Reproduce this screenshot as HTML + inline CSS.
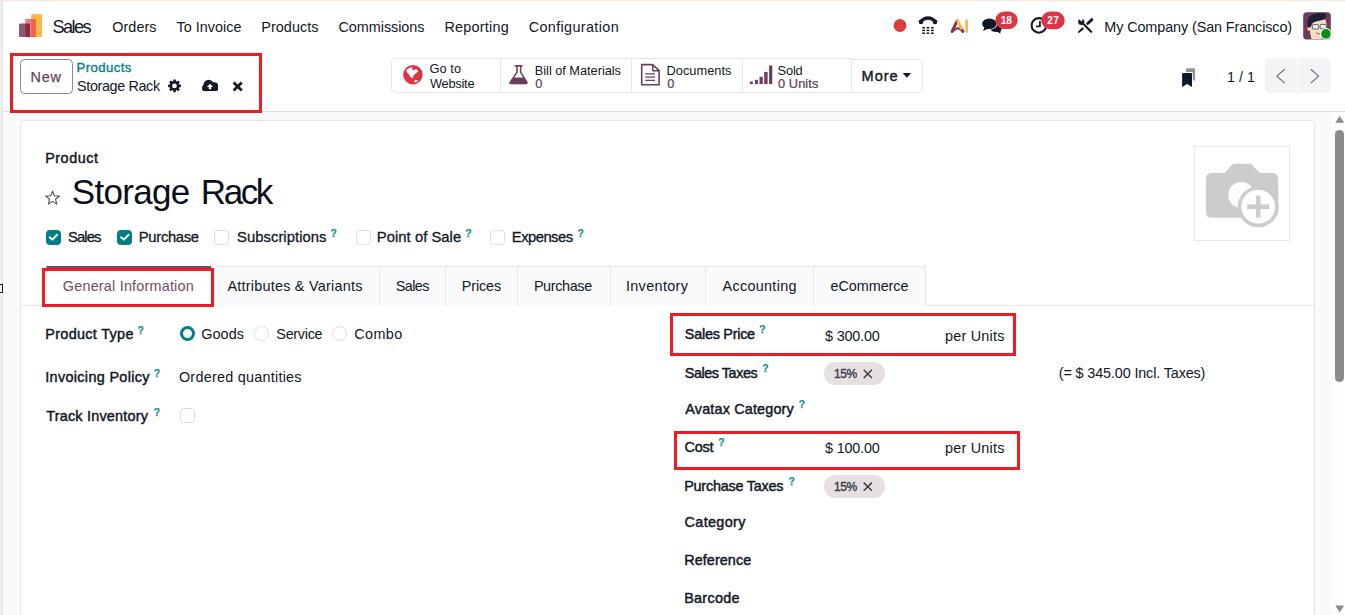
<!DOCTYPE html>
<html lang="en"><head><meta charset="utf-8"><title>Odoo - Storage Rack</title>
<style>

html,body{margin:0;padding:0}
body{width:1345px;height:615px;overflow:hidden;position:relative;background:#fff;font-family:"Liberation Sans",sans-serif;color:#111827}
.t{position:absolute;white-space:nowrap;line-height:1;display:block}
.b{position:absolute;box-sizing:border-box}
svg{position:absolute;overflow:visible}
.red{position:absolute;box-sizing:border-box;border:3px solid #ed1c24}
.tab{position:absolute;box-sizing:border-box;top:266px;height:40px;background:#f9fafb;border:1px solid #e4e7eb;border-bottom:none}
.cb{position:absolute;box-sizing:border-box;width:15px;height:15px;border:1px solid #dadde2;border-radius:3.5px;background:#fff}
.cb.on{background:#017e84;border-color:#017e84}
.rd{position:absolute;box-sizing:border-box;width:15px;height:15px;border:1px solid #dadde2;border-radius:50%;background:#fff}
.rd.on{border:3.8px solid #017e84}
.tag{position:absolute;box-sizing:border-box;height:22.6px;width:60.5px;border-radius:11.3px;background:#e8dfe1}

</style></head>
<body>

<div class="b" style="left:0;top:0;width:1345px;height:2.4px;background:linear-gradient(180deg,#f6dfd1,#fff)"></div>
<nav class="b" id="navbar" style="left:3px;top:2px;width:1342px;height:46px;background:#fff"></nav>
<header class="b" id="control-panel" style="left:3px;top:48px;width:1342px;height:64px;background:#fff;border-bottom:1px solid #dcdfe3"></header>
<main class="b" id="content" style="left:3px;top:112px;width:1329px;height:503px;background:#f9fafb"></main>
<div class="b" id="scrollbar" style="left:1332px;top:112px;width:13px;height:503px;background:#fdfdfd"></div>
<div class="b" style="left:1335.2px;top:130.2px;width:8.5px;height:252px;border-radius:4.25px;background:#898a8d"></div>
<div class="b" style="left:0;top:0;width:3px;height:615px;background:linear-gradient(90deg,#f3f4f6 0,#f3f4f6 30%,#e7e8eb 45%,#e7e8eb 100%)"></div>
<div class="b" style="left:-3.2px;top:283.9px;width:5.9px;height:9px;border:1.4px solid #111827;background:#fff"></div>
<section class="b" id="sheet" style="left:19.8px;top:120px;width:1295.4px;height:520px;background:#fff;border:1px solid #e4e6e9;border-radius:3.5px"></section>
<!-- New button -->
<div class="b" style="left:20px;top:59px;width:52.5px;height:34.5px;border:1px solid #9a8294;border-radius:4.5px;background:#fff"></div>
<!-- button box -->
<div class="b" style="left:850px;top:59px;width:72.6px;height:33.6px;border:1px solid #e3e6ea;border-left:none;border-radius:0 5px 5px 0;background:#fff"></div>
<div class="b" style="left:390.5px;top:58px;width:461.5px;height:35.2px;border:1px solid #e3e6ea;border-radius:5px 0 0 5px;background:#fff"></div>
<div class="b" style="left:499.5px;top:59px;width:1px;height:33.2px;background:#e3e6ea"></div>
<div class="b" style="left:631px;top:59px;width:1px;height:33.2px;background:#e3e6ea"></div>
<div class="b" style="left:742px;top:59px;width:1px;height:33.2px;background:#e3e6ea"></div>
<!-- pager -->
<div class="b" style="left:1265px;top:58.3px;width:32.4px;height:34.4px;background:#f3f4f6;border-radius:5px 0 0 5px"></div>
<div class="b" style="left:1298.3px;top:58.3px;width:32.6px;height:34.4px;background:#f3f4f6;border-radius:0 5px 5px 0"></div>
<!-- image frame -->
<div class="b" style="left:1194px;top:145.5px;width:95.5px;height:95px;border:1px solid #e5e7eb;background:#fff"></div>
<!-- tabs -->
<div class="b" style="left:21.5px;top:305px;width:1292.5px;height:1px;background:#e1e4e8"></div>
<div class="tab" style="left:46px;width:165.5px;background:#fff;border-top:2px solid #714b67;border-color:#714b67 #e4e7eb #e4e7eb #e4e7eb"></div>
<div class="tab" style="left:210.5px;width:169.5px"></div>
<div class="tab" style="left:379px;width:67px"></div>
<div class="tab" style="left:445px;width:73px"></div>
<div class="tab" style="left:517px;width:93.5px"></div>
<div class="tab" style="left:609.5px;width:96.5px"></div>
<div class="tab" style="left:705px;width:109px"></div>
<div class="tab" style="left:813px;width:113px"></div>
<!-- checkboxes -->
<div class="cb on" style="left:45.5px;top:229.7px"></div>
<div class="cb on" style="left:117px;top:229.7px"></div>
<div class="cb" style="left:214px;top:229.7px"></div>
<div class="cb" style="left:355.8px;top:229.7px"></div>
<div class="cb" style="left:490.3px;top:229.7px"></div>
<div class="cb" style="left:180px;top:407.7px"></div>
<div class="rd on" style="left:179.6px;top:326.3px"></div>
<div class="rd" style="left:254.3px;top:326.3px"></div>
<div class="rd" style="left:332.3px;top:326.3px"></div>
<!-- tags -->
<div class="tag" style="left:824.3px;top:362.2px"></div>
<div class="tag" style="left:824.3px;top:475px"></div>

<svg id="icons" width="1345" height="615" viewBox="0 0 1345 615" style="left:0;top:0">
<g id="logo">
<rect x="19" y="23.6" width="11" height="13.5" rx="1" fill="#8b5a6e"/>
<rect x="25.2" y="19.1" width="10.6" height="18" rx="1" fill="#e8808a"/>
<rect x="25.2" y="23.6" width="4.8" height="13.5" fill="#8a2a4b"/>
<rect x="31.2" y="14.3" width="10.9" height="22.8" rx="1" fill="#fbb646"/>
<rect x="31.2" y="19.1" width="4.6" height="18" fill="#ee6345"/>
</g>
<g id="cog"><circle cx="174.5" cy="85.9" r="4.9" fill="#111827"/><rect x="173.2" y="79.5" width="2.6" height="2.7" rx="0.4" fill="#111827" transform="rotate(0 174.5 85.9)"/><rect x="173.2" y="79.5" width="2.6" height="2.7" rx="0.4" fill="#111827" transform="rotate(45 174.5 85.9)"/><rect x="173.2" y="79.5" width="2.6" height="2.7" rx="0.4" fill="#111827" transform="rotate(90 174.5 85.9)"/><rect x="173.2" y="79.5" width="2.6" height="2.7" rx="0.4" fill="#111827" transform="rotate(135 174.5 85.9)"/><rect x="173.2" y="79.5" width="2.6" height="2.7" rx="0.4" fill="#111827" transform="rotate(180 174.5 85.9)"/><rect x="173.2" y="79.5" width="2.6" height="2.7" rx="0.4" fill="#111827" transform="rotate(225 174.5 85.9)"/><rect x="173.2" y="79.5" width="2.6" height="2.7" rx="0.4" fill="#111827" transform="rotate(270 174.5 85.9)"/><rect x="173.2" y="79.5" width="2.6" height="2.7" rx="0.4" fill="#111827" transform="rotate(315 174.5 85.9)"/><circle cx="174.5" cy="85.9" r="2.35" fill="#fff"/></g>
<g id="cloud" fill="#111827">
<circle cx="208.7" cy="84.9" r="5.2"/><circle cx="214.3" cy="86" r="3.8"/><circle cx="205.5" cy="87.9" r="3.3"/>
<rect x="202.2" y="85.8" width="15.9" height="5.3" rx="2.6"/>
<path d="M210,83.8 L213.2,87.1 H211.2 V89.2 H208.8 V87.1 H206.8 Z" fill="#fff"/>
</g>
<path id="times" d="M233.6,82.6 L241.8,90.6 M241.8,82.6 L233.6,90.6" stroke="#111827" stroke-width="2.8" fill="none"/>
<g id="globe"><circle cx="412.9" cy="74.65" r="9.75" fill="#dc3545"/>
<polygon fill="#fff" points="406.2,69.9 409.8,67.7 412.6,67.1 412,69.3 414.2,70.4 415.3,69 417.8,69.9 418.1,71.5 415.9,73.2 414.2,75.1 412.8,76.3 413.6,77.6 412.2,78.2 410.4,76.8 409.3,75.1 407.3,72.9 406.5,71.3"/>
<polygon fill="#fff" points="414.2,81.2 415.1,79.8 418.4,80.4 417.3,81.5 414.8,82.6"/></g>
<g id="flask" stroke="#6b3f5b" fill="none" stroke-width="1.5" stroke-linejoin="round">
<path d="M517,66 V72.2 L510.4,82.2 Q509.6,83.4 511,83.4 H526 Q527.4,83.4 526.7,82.2 L520.6,72.2 V66"/>
<path d="M514.6,65.9 H522.6" stroke-width="1.7"/>
<path d="M513.2,77.9 H524.1 L527,82.6 Q527.4,83.6 526,83.6 H511 Q509.6,83.6 510,82.6 Z" fill="#6b3f5b" stroke-width="0.8"/></g>
<g id="doc" stroke="#6b3f5b" fill="none" stroke-linejoin="round">
<path d="M641.7,64.6 H652.6 L659.1,70.6 V84.8 H641.7 Z" stroke-width="1.6"/>
<path d="M652.8,64.6 V70.8 H659.1" stroke-width="1.5"/>
<path d="M645.3,73.9 H655 M645.3,77.2 H655 M645.3,80.4 H655" stroke-width="1.3"/></g>
<g id="bars" fill="#6b3f5b">
<rect x="749.8" y="81.5" width="3" height="2.6"/><rect x="754.9" y="79.8" width="3" height="4.3"/>
<rect x="759.5" y="76.8" width="3.3" height="7.3"/><rect x="764.2" y="71.9" width="3.4" height="12.2"/>
<rect x="769.1" y="65.5" width="3.2" height="18.6"/></g>
<polygon id="caret" points="902.7,73.1 911.1,73.1 906.9,77.8" fill="#111827"/>
<circle cx="900" cy="25.5" r="6.4" fill="#dc3c3c"/>
<g id="phone">
<path d="M920.3,21.7 Q928,14.2 935.7,21.7" fill="none" stroke="#111827" stroke-width="3.2" stroke-linecap="round"/>
<circle cx="921" cy="21.9" r="2.25" fill="#111827"/><circle cx="935" cy="21.9" r="2.25" fill="#111827"/>
<g fill="#111827"><rect x="922.25" y="26.95" width="2.7" height="1.5"/><rect x="922.25" y="29.65" width="2.7" height="1.5"/><rect x="922.25" y="32.45" width="2.7" height="1.5"/><rect x="926.55" y="26.95" width="2.7" height="1.5"/><rect x="926.55" y="29.65" width="2.7" height="1.5"/><rect x="926.55" y="32.45" width="2.7" height="1.5"/><rect x="930.9499999999999" y="26.95" width="2.7" height="1.5"/><rect x="930.9499999999999" y="29.65" width="2.7" height="1.5"/><rect x="930.9499999999999" y="32.45" width="2.7" height="1.5"/></g></g>
<g id="ai" fill="none" stroke-linecap="round">
<path d="M952.2,31.6 Q957.3,25.4 962.8,31.2" stroke="#8b5a6e" stroke-width="2.7"/>
<path d="M957.2,20.7 L952,31.4" stroke="#8e2f50" stroke-width="2.8"/>
<path d="M961.1,28.3 L962.9,31.5" stroke="#8e2f50" stroke-width="2.8"/>
<path d="M957.5,20.6 L961.3,28.4" stroke="#fbb646" stroke-width="2.8"/>
<path d="M966.65,20.8 V31.6" stroke="#fbb646" stroke-width="2.6"/></g>
<g id="chat" fill="#111827">
<ellipse cx="996" cy="27.4" rx="6.2" ry="4.6"/><polygon points="996,30.5 1000.2,33.8 1001,29"/>
<ellipse cx="989.3" cy="23.7" rx="8.1" ry="6.1" fill="#fff"/>
<ellipse cx="989.3" cy="23.7" rx="7.2" ry="5.2"/><polygon points="984.6,26.6 983.1,30.9 988.6,28.6"/></g>
<g id="clock" fill="none" stroke="#111827">
<circle cx="1038.9" cy="25.4" r="7.3" stroke-width="2.1"/>
<path d="M1039.9,21 V26.3 H1036" stroke-width="1.7"/></g>
<rect x="995.5" y="11.5" width="22.1" height="17.6" rx="8.8" fill="#dc3545"/>
<rect x="1041.3" y="11.6" width="23.4" height="17.6" rx="8.8" fill="#dc3545"/>
<g id="tools">
<path d="M1082,22.6 L1091.2,31.8" stroke="#111827" stroke-width="2.1" stroke-linecap="round" fill="none"/>
<circle cx="1081.2" cy="21.8" r="3.1" fill="#111827"/>
<path d="M1081.4,21.6 L1077.6,17.8 L1080.6,16.6 L1082.9,20.3 Z" fill="#fff"/>
<path d="M1087.7,23.5 L1091.9,19.6" stroke="#111827" stroke-width="2.8" stroke-linecap="round" fill="none"/>
<polygon points="1082.4,27.3 1084.2,29.1 1079.6,32.5 1077.9,33 1078.4,31.3" fill="#111827"/></g>
<g id="avatar">
<clipPath id="avc"><rect x="1303.2" y="12.2" width="27.6" height="27.3" rx="3.5"/></clipPath>
<g clip-path="url(#avc)">
<rect x="1303" y="12" width="28" height="28" fill="#6d3a57"/>
<path d="M1311.5,39.6 L1310.2,33 Q1309.3,25 1312,20 L1325.4,19.4 Q1327.6,26 1326.4,31.5 Q1324.8,37.6 1320.5,39.6 Z" fill="#f7dcc0"/>
<ellipse cx="1309" cy="28.6" rx="1.7" ry="2.5" fill="#f3cfae"/>
<path d="M1308,28 Q1305.6,17 1313,14.4 Q1322,11.8 1326.6,14.2 Q1326.4,19.6 1319.5,20.8 Q1313.5,21.6 1312,24 L1310.6,27.6 Q1309.4,26.4 1308,28 Z" fill="#1c2136"/>
<rect x="1312.4" y="24.6" width="6.3" height="4.4" rx="0.8" fill="#eef1f4" stroke="#4b5060" stroke-width="0.9"/>
<rect x="1320.2" y="24.4" width="6" height="4.4" rx="0.8" fill="#eef1f4" stroke="#4b5060" stroke-width="0.9"/>
<path d="M1316.4,32.6 Q1319,35 1322,33" stroke="#8a4050" stroke-width="0.9" fill="#fff"/>
</g>
<circle cx="1325.9" cy="33.9" r="5.9" fill="#fff"/><circle cx="1325.9" cy="33.9" r="4.8" fill="#089016"/></g>
<g id="bookmarks">
<path d="M1187.1,68.3 H1194.1 Q1195.1,68.3 1195.1,69.3 V81.3 L1192.6,79.2 V72 H1186.1 V69.3 Q1186.1,68.3 1187.1,68.3 Z" fill="#8f9196"/>
<path d="M1183.1,73 H1191 Q1192,73 1192,74 V87.1 L1187.05,84.1 L1182.1,87.1 V74 Q1182.1,73 1183.1,73 Z" fill="#111827" stroke="#fff" stroke-width="0.9" paint-order="stroke"/></g>
<g id="chev" fill="none" stroke="#6b7280" stroke-width="1.25">
<polyline points="1284.7,69.2 1277,76.15 1284.7,83.1"/><polyline points="1310.8,69.2 1318.6,76.15 1310.8,83.1"/></g>
<polygon points="52.55,191.10 54.37,195.79 59.40,196.08 55.50,199.26 56.78,204.12 52.55,201.40 48.32,204.12 49.60,199.26 45.70,196.08 50.73,195.79" fill="none" stroke="#4b5563" stroke-width="1.1" stroke-linejoin="round"/>
<polyline points="49.599999999999994,237.29999999999998 52.3,239.6 57.099999999999994,234.79999999999998" fill="none" stroke="#fff" stroke-width="2" stroke-linecap="round" stroke-linejoin="round"/><polyline points="121.1,237.29999999999998 123.8,239.6 128.6,234.79999999999998" fill="none" stroke="#fff" stroke-width="2" stroke-linecap="round" stroke-linejoin="round"/>
<path d="M863.6999999999999,369.79999999999995 L871.9,378.0 M871.9,369.79999999999995 L863.6999999999999,378.0" stroke="#3a4050" stroke-width="1.5" fill="none"/><path d="M863.6999999999999,482.59999999999997 L871.9,490.8 M871.9,482.59999999999997 L863.6999999999999,490.8" stroke="#3a4050" stroke-width="1.5" fill="none"/>
<g id="camera">
<path d="M1211.8,172.9 H1224.4 L1232.8,163.8 H1250.8 L1259.9,172.9 H1272.2 Q1278.2,172.9 1278.2,178.9 V211.7 Q1278.2,217.7 1272.2,217.7 H1211.8 Q1205.8,217.7 1205.8,211.7 V178.9 Q1205.8,172.9 1211.8,172.9 Z" fill="#cccccc"/>
<circle cx="1241.3" cy="195" r="13" fill="#fff"/>
<circle cx="1258.2" cy="206.7" r="20.5" fill="#cccccc"/>
<circle cx="1258.2" cy="206.7" r="16.9" fill="#fff"/>
<rect x="1247.2" y="204.4" width="22" height="4.6" fill="#cccccc"/><rect x="1255.9" y="195.7" width="4.6" height="22" fill="#cccccc"/></g>
<polygon points="1335.2,122.8 1344.2,122.8 1339.7,116" fill="#8b8b8f"/><polygon points="1335.2,605.5 1344.2,605.5 1339.7,612.2" fill="#8b8b8f"/>
</svg>
<div id="txt">
<span class="t" style="left:52.43px;top:17.59px;font-size:18.2px;letter-spacing:-1.597px;">Sales</span>
<span class="t" style="left:112.33px;top:19.71px;font-size:14.4px;letter-spacing:0.023px;">Orders</span>
<span class="t" style="left:176.58px;top:19.71px;font-size:14.4px;letter-spacing:0.019px;">To Invoice</span>
<span class="t" style="left:261.27px;top:19.71px;font-size:14.4px;letter-spacing:0.064px;">Products</span>
<span class="t" style="left:338.52px;top:19.71px;font-size:14.4px;letter-spacing:-0.039px;">Commissions</span>
<span class="t" style="left:444.38px;top:19.71px;font-size:14.4px;letter-spacing:0.250px;">Reporting</span>
<span class="t" style="left:528.73px;top:19.71px;font-size:14.4px;letter-spacing:0.361px;">Configuration</span>
<span class="t" style="left:1104.28px;top:19.71px;font-size:14.4px;letter-spacing:-0.099px;">My Company (San Francisco)</span>
<span class="t" style="left:1000.86px;top:16.36px;font-size:10.2px;letter-spacing:-0.354px;color:#fff;font-weight:700;">18</span>
<span class="t" style="left:1047.18px;top:16.36px;font-size:10.2px;letter-spacing:0.387px;color:#fff;font-weight:700;">27</span>
<span class="t" style="left:30.57px;top:70.41px;font-size:14.4px;letter-spacing:0.721px;color:#67445d;-webkit-text-stroke:0.25px currentColor;">New</span>
<span class="t" style="left:76.47px;top:60.82px;font-size:13.2px;letter-spacing:0.408px;color:#017e84;-webkit-text-stroke:0.35px currentColor;">Products</span>
<span class="t" style="left:77.05px;top:78.91px;font-size:14.4px;letter-spacing:-0.374px;">Storage Rack</span>
<span class="t" style="left:429.40px;top:62.76px;font-size:12.8px;letter-spacing:0.078px;">Go to</span>
<span class="t" style="left:430.00px;top:78.16px;font-size:12.8px;letter-spacing:-0.248px;">Website</span>
<span class="t" style="left:534.80px;top:64.66px;font-size:12.8px;letter-spacing:-0.036px;">Bill of Materials</span>
<span class="t" style="left:535.30px;top:78.46px;font-size:12.8px;color:#5c3a52;-webkit-text-stroke:0.2px currentColor;">0</span>
<span class="t" style="left:666.60px;top:64.66px;font-size:12.8px;letter-spacing:0.008px;">Documents</span>
<span class="t" style="left:667.30px;top:78.46px;font-size:12.8px;color:#5c3a52;-webkit-text-stroke:0.2px currentColor;">0</span>
<span class="t" style="left:777.50px;top:64.66px;font-size:12.8px;letter-spacing:-0.133px;">Sold</span>
<span class="t" style="left:777.90px;top:78.46px;font-size:12.8px;letter-spacing:0.110px;color:#5c3a52;-webkit-text-stroke:0.2px currentColor;">0 Units</span>
<span class="t" style="left:861.56px;top:69.04px;font-size:14.6px;letter-spacing:0.923px;-webkit-text-stroke:0.4px currentColor;">More</span>
<span class="t" style="left:1227.10px;top:70.31px;font-size:14.4px;letter-spacing:-0.034px;">1 / 1</span>
<span class="t" style="left:45.17px;top:150.61px;font-size:14.4px;letter-spacing:0.525px;-webkit-text-stroke:0.45px currentColor;">Product</span>
<h1 style="margin:0;font:inherit"><span class="t" style="left:71.81px;top:174.07px;font-size:35px;letter-spacing:-0.712px;color:#0b0f19;">Storage</span> 
<span class="t" style="left:200.87px;top:174.07px;font-size:35px;letter-spacing:-2.451px;color:#0b0f19;">Rack</span></h1>
<span class="t" style="left:67.94px;top:229.67px;font-size:14.8px;letter-spacing:-0.874px;-webkit-text-stroke:0.3px currentColor;">Sales</span>
<span class="t" style="left:138.84px;top:229.67px;font-size:14.8px;letter-spacing:-0.324px;-webkit-text-stroke:0.3px currentColor;">Purchase</span>
<span class="t" style="left:237.04px;top:229.67px;font-size:14.8px;letter-spacing:0.048px;-webkit-text-stroke:0.3px currentColor;">Subscriptions</span>
<span class="t" style="left:376.84px;top:229.67px;font-size:14.8px;letter-spacing:0.036px;-webkit-text-stroke:0.3px currentColor;">Point of Sale</span>
<span class="t" style="left:511.84px;top:229.67px;font-size:14.8px;letter-spacing:-0.540px;-webkit-text-stroke:0.3px currentColor;">Expenses</span>
<span class="t" style="left:62.83px;top:279.01px;font-size:14.4px;letter-spacing:0.207px;color:#714b67;">General Information</span>
<span class="t" style="left:227.40px;top:279.01px;font-size:14.4px;letter-spacing:0.243px;">Attributes &amp; Variants</span>
<span class="t" style="left:395.85px;top:279.01px;font-size:14.4px;letter-spacing:-0.605px;">Sales</span>
<span class="t" style="left:461.77px;top:279.01px;font-size:14.4px;letter-spacing:-0.127px;">Prices</span>
<span class="t" style="left:533.88px;top:279.01px;font-size:14.4px;letter-spacing:-0.361px;">Purchase</span>
<span class="t" style="left:625.88px;top:279.01px;font-size:14.4px;letter-spacing:0.362px;">Inventory</span>
<span class="t" style="left:722.60px;top:279.01px;font-size:14.4px;letter-spacing:0.296px;">Accounting</span>
<span class="t" style="left:830.45px;top:279.01px;font-size:14.4px;letter-spacing:-0.036px;">eCommerce</span>
<span class="t" style="left:45.27px;top:326.61px;font-size:14.4px;letter-spacing:0.333px;-webkit-text-stroke:0.45px currentColor;">Product Type</span>
<span class="t" style="left:201.22px;top:326.61px;font-size:14.4px;letter-spacing:0.075px;">Goods</span>
<span class="t" style="left:276.35px;top:326.61px;font-size:14.4px;letter-spacing:-0.297px;">Service</span>
<span class="t" style="left:354.32px;top:326.61px;font-size:14.4px;letter-spacing:0.385px;">Combo</span>
<span class="t" style="left:45.27px;top:370.11px;font-size:14.4px;letter-spacing:0.332px;-webkit-text-stroke:0.45px currentColor;">Invoicing Policy</span>
<span class="t" style="left:178.92px;top:370.11px;font-size:14.4px;letter-spacing:0.250px;">Ordered quantities</span>
<span class="t" style="left:46.17px;top:409.41px;font-size:14.4px;letter-spacing:0.223px;-webkit-text-stroke:0.45px currentColor;">Track Inventory</span>
<span class="t" style="left:684.85px;top:327.01px;font-size:14.4px;letter-spacing:-0.250px;-webkit-text-stroke:0.45px currentColor;">Sales Price</span>
<span class="t" style="left:825.00px;top:328.51px;font-size:14.4px;letter-spacing:-0.171px;">$ 300.00</span>
<span class="t" style="left:945.10px;top:328.51px;font-size:14.4px;letter-spacing:0.216px;">per Units</span>
<span class="t" style="left:684.85px;top:365.71px;font-size:14.4px;letter-spacing:-0.454px;-webkit-text-stroke:0.45px currentColor;">Sales Taxes</span>
<span class="t" style="left:834.05px;top:368.04px;font-size:12px;letter-spacing:-0.455px;color:#3a4050;-webkit-text-stroke:0.4px currentColor;">15%</span>
<span class="t" style="left:1058.83px;top:366.11px;font-size:14.4px;letter-spacing:-0.137px;">(= $ 345.00 Incl. Taxes)</span>
<span class="t" style="left:685.30px;top:402.41px;font-size:14.4px;letter-spacing:0.165px;-webkit-text-stroke:0.45px currentColor;">Avatax Category</span>
<span class="t" style="left:684.62px;top:439.91px;font-size:14.4px;letter-spacing:-0.261px;-webkit-text-stroke:0.45px currentColor;">Cost</span>
<span class="t" style="left:825.00px;top:441.11px;font-size:14.4px;letter-spacing:-0.171px;">$ 100.00</span>
<span class="t" style="left:945.10px;top:441.11px;font-size:14.4px;letter-spacing:0.216px;">per Units</span>
<span class="t" style="left:684.17px;top:478.61px;font-size:14.4px;letter-spacing:-0.214px;-webkit-text-stroke:0.45px currentColor;">Purchase Taxes</span>
<span class="t" style="left:834.05px;top:480.84px;font-size:12px;letter-spacing:-0.455px;color:#3a4050;-webkit-text-stroke:0.4px currentColor;">15%</span>
<span class="t" style="left:684.62px;top:515.31px;font-size:14.4px;letter-spacing:0.335px;-webkit-text-stroke:0.45px currentColor;">Category</span>
<span class="t" style="left:684.17px;top:553.01px;font-size:14.4px;letter-spacing:0.084px;-webkit-text-stroke:0.45px currentColor;">Reference</span>
<span class="t" style="left:684.17px;top:591.21px;font-size:14.4px;letter-spacing:0.296px;-webkit-text-stroke:0.45px currentColor;">Barcode</span>
<span class="t" style="left:330.48px;top:229.08px;font-size:10.3px;color:#1a8fa3;font-weight:700;-webkit-text-stroke:0.25px currentColor;">?</span>
<span class="t" style="left:465.18px;top:229.08px;font-size:10.3px;color:#1a8fa3;font-weight:700;-webkit-text-stroke:0.25px currentColor;">?</span>
<span class="t" style="left:577.38px;top:229.08px;font-size:10.3px;color:#1a8fa3;font-weight:700;-webkit-text-stroke:0.25px currentColor;">?</span>
<span class="t" style="left:137.38px;top:326.08px;font-size:10.3px;color:#1a8fa3;font-weight:700;-webkit-text-stroke:0.25px currentColor;">?</span>
<span class="t" style="left:153.68px;top:368.58px;font-size:10.3px;color:#1a8fa3;font-weight:700;-webkit-text-stroke:0.25px currentColor;">?</span>
<span class="t" style="left:153.68px;top:407.88px;font-size:10.3px;color:#1a8fa3;font-weight:700;-webkit-text-stroke:0.25px currentColor;">?</span>
<span class="t" style="left:759.28px;top:325.48px;font-size:10.3px;color:#1a8fa3;font-weight:700;-webkit-text-stroke:0.25px currentColor;">?</span>
<span class="t" style="left:762.28px;top:364.18px;font-size:10.3px;color:#1a8fa3;font-weight:700;-webkit-text-stroke:0.25px currentColor;">?</span>
<span class="t" style="left:798.68px;top:399.88px;font-size:10.3px;color:#1a8fa3;font-weight:700;-webkit-text-stroke:0.25px currentColor;">?</span>
<span class="t" style="left:718.28px;top:438.38px;font-size:10.3px;color:#1a8fa3;font-weight:700;-webkit-text-stroke:0.25px currentColor;">?</span>
<span class="t" style="left:788.48px;top:477.08px;font-size:10.3px;color:#1a8fa3;font-weight:700;-webkit-text-stroke:0.25px currentColor;">?</span>
</div>

<div class="red" style="left:10px;top:53px;width:252px;height:60px"></div>
<div class="red" style="left:42px;top:268px;width:172px;height:39px"></div>
<div class="red" style="left:670px;top:313px;width:346px;height:43px"></div>
<div class="red" style="left:674px;top:431px;width:346px;height:39px"></div>

</body></html>
